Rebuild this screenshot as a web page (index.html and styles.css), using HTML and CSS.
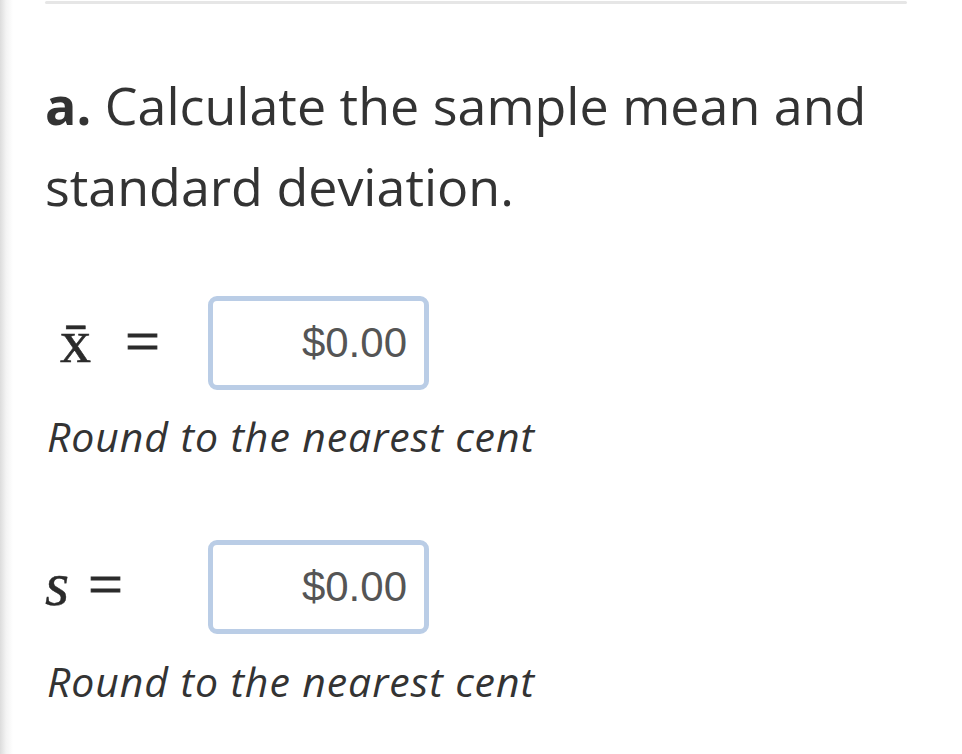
FILE: index.html
```html
<!DOCTYPE html>
<html lang="en">
<head>
<meta charset="utf-8">
<title>Sample mean and standard deviation</title>
<link rel="stylesheet" href="styles.css">
</head>
<body>
<div class="page">
  <div class="rule"></div>
  <h2 class="question"><b>a.</b> Calculate the sample mean and standard deviation.</h2>

  <div class="row row-first">
    <div class="label"><span class="var var-x">x̄</span><span class="eq">=</span></div>
    <div class="answer">$0.00</div>
  </div>
  <p class="hint">Round to the nearest cent</p>

  <div class="row row-second">
    <div class="label"><span class="var var-s">s</span><span class="eq eq-s">=</span></div>
    <div class="answer">$0.00</div>
  </div>
  <p class="hint hint-last">Round to the nearest cent</p>
</div>
</body>
</html>
```

FILE: styles.css
```css
html, body {
  margin: 0;
  padding: 0;
}

body {
  background: linear-gradient(to right, #dcdcdc 0, #f3f3f3 6px, #ffffff 13px);
  min-height: 754px;
  color: #333333;
  font-family: "Open Sans", "Noto Sans", sans-serif;
}

.page {
  padding: 1px 55px 0 45px;
}

.rule {
  height: 3px;
  background: #e6e6e6;
  border-radius: 2px;
}

.question {
  margin: 60px 0 0 0;
  font-size: 52px;
  line-height: 81px;
  font-weight: 400;
  color: #333333;
}

.question b {
  font-weight: 700;
}

.row {
  display: flex;
  align-items: center;
}

.row-first {
  margin-top: 70px;
}

.row-second {
  margin-top: 79px;
}

.label {
  width: 163px;
  display: flex;
  align-items: baseline;
  font-family: "Liberation Serif", "Times New Roman", serif;
  font-size: 62px;
  line-height: 62px;
  color: #2b2b2b;
  margin-bottom: 4px;
}

.row-second .label {
  margin-bottom: 6px;
}

.var-x {
  margin-left: 15px;
  width: 65px;
  -webkit-text-stroke: 0.6px #2b2b2b;
}

.var-s {
  font-style: italic;
  width: 43px;
  -webkit-text-stroke: 0.4px #2b2b2b;
}

.eq {
  display: inline-block;
  -webkit-text-stroke: 0.8px #2b2b2b;
}

.answer {
  box-sizing: border-box;
  width: 221px;
  height: 94px;
  border: 5px solid #bacde6;
  border-radius: 9px;
  background: #ffffff;
  display: flex;
  align-items: center;
  justify-content: flex-end;
  padding-right: 17px;
  font-family: "Liberation Sans", Arial, sans-serif;
  font-size: 42px;
  color: #555555;
}

.hint {
  margin: 21px 0 0 2px;
  font-style: italic;
  font-size: 41px;
  letter-spacing: 0.9px;
  line-height: 50px;
  color: #333333;
}

.hint-last {
  margin-top: 22px;
}
```
